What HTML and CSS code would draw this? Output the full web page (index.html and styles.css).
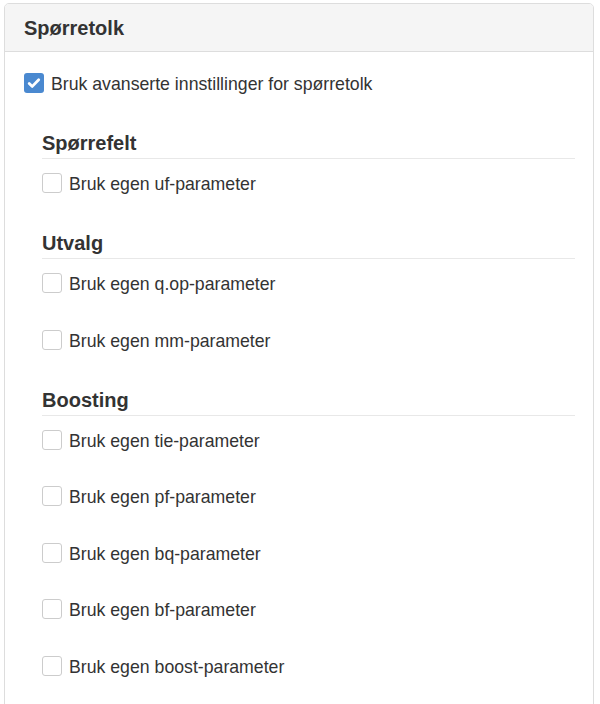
FILE: index.html
```html
<!DOCTYPE html>
<html lang="no">
<head>
    <meta charset="UTF-8">
    <meta name="viewport" content="width=device-width, initial-scale=1.0">
    <title>Spørretolk</title>
    <link rel="stylesheet" href="styles.css">
</head>
<body>
    <div class="panel">
        <div class="panel-heading">Spørretolk</div>
        <div class="panel-body">
            <label class="option">
                <span class="box checked">
                    <svg viewBox="0 0 20 20" width="20" height="20"><path d="M5.2 10.4l3.1 3 6.4-6.6" fill="none" stroke="#fff" stroke-width="2.8" stroke-linecap="round" stroke-linejoin="round"/></svg>
                </span>
                <span class="text">Bruk avanserte innstillinger for spørretolk</span>
            </label>

            <div class="section">
                <h4>Spørrefelt</h4>
                <div class="options">
                    <label class="option"><span class="box"></span><span class="text">Bruk egen uf-parameter</span></label>
                </div>
            </div>

            <div class="section">
                <h4>Utvalg</h4>
                <div class="options">
                    <label class="option"><span class="box"></span><span class="text">Bruk egen q.op-parameter</span></label>
                    <label class="option"><span class="box"></span><span class="text">Bruk egen mm-parameter</span></label>
                </div>
            </div>

            <div class="section">
                <h4>Boosting</h4>
                <div class="options">
                    <label class="option"><span class="box"></span><span class="text">Bruk egen tie-parameter</span></label>
                    <label class="option"><span class="box"></span><span class="text">Bruk egen pf-parameter</span></label>
                    <label class="option"><span class="box"></span><span class="text">Bruk egen bq-parameter</span></label>
                    <label class="option"><span class="box"></span><span class="text">Bruk egen bf-parameter</span></label>
                    <label class="option"><span class="box"></span><span class="text">Bruk egen boost-parameter</span></label>
                </div>
            </div>
        </div>
    </div>
</body>
</html>
```

FILE: styles.css
```css
body {
    margin: 0;
    background-color: #ffffff;
    color: #333333;
    font-family: "Liberation Sans", Arial, sans-serif;
}
.panel {
    margin: 3px 6px 0 4px;
    border: 1px solid #dddddd;
    border-radius: 5px;
    overflow: hidden;
}
.panel-heading {
    background-color: #f5f5f5;
    border-bottom: 1px solid #dddddd;
    padding: 13px 19px 12px;
    font-size: 20px;
    line-height: 22px;
    font-weight: bold;
}
.panel-body {
    padding: 21px 18px 40px 19px;
}
.option {
    display: flex;
    align-items: center;
    gap: 7px;
    height: 20px;
    font-size: 17.7px;
    cursor: pointer;
}
.option .text {
    padding-top: 3px;
}
.box {
    width: 18px;
    height: 18px;
    flex-shrink: 0;
    border: 1px solid #cccccc;
    border-radius: 3px;
    background-color: #ffffff;
}
.box.checked {
    width: 20px;
    height: 20px;
    border: none;
    background-color: #4a89d0;
}
.box svg {
    display: block;
}
.section {
    margin: 39px 0 0 18px;
}
.section h4 {
    margin: 0 0 14px;
    padding-bottom: 3px;
    border-bottom: 1px solid #e8e8e8;
    font-size: 20px;
    line-height: 23px;
}
.options {
    display: flex;
    flex-direction: column;
    gap: 36.5px;
}
```
